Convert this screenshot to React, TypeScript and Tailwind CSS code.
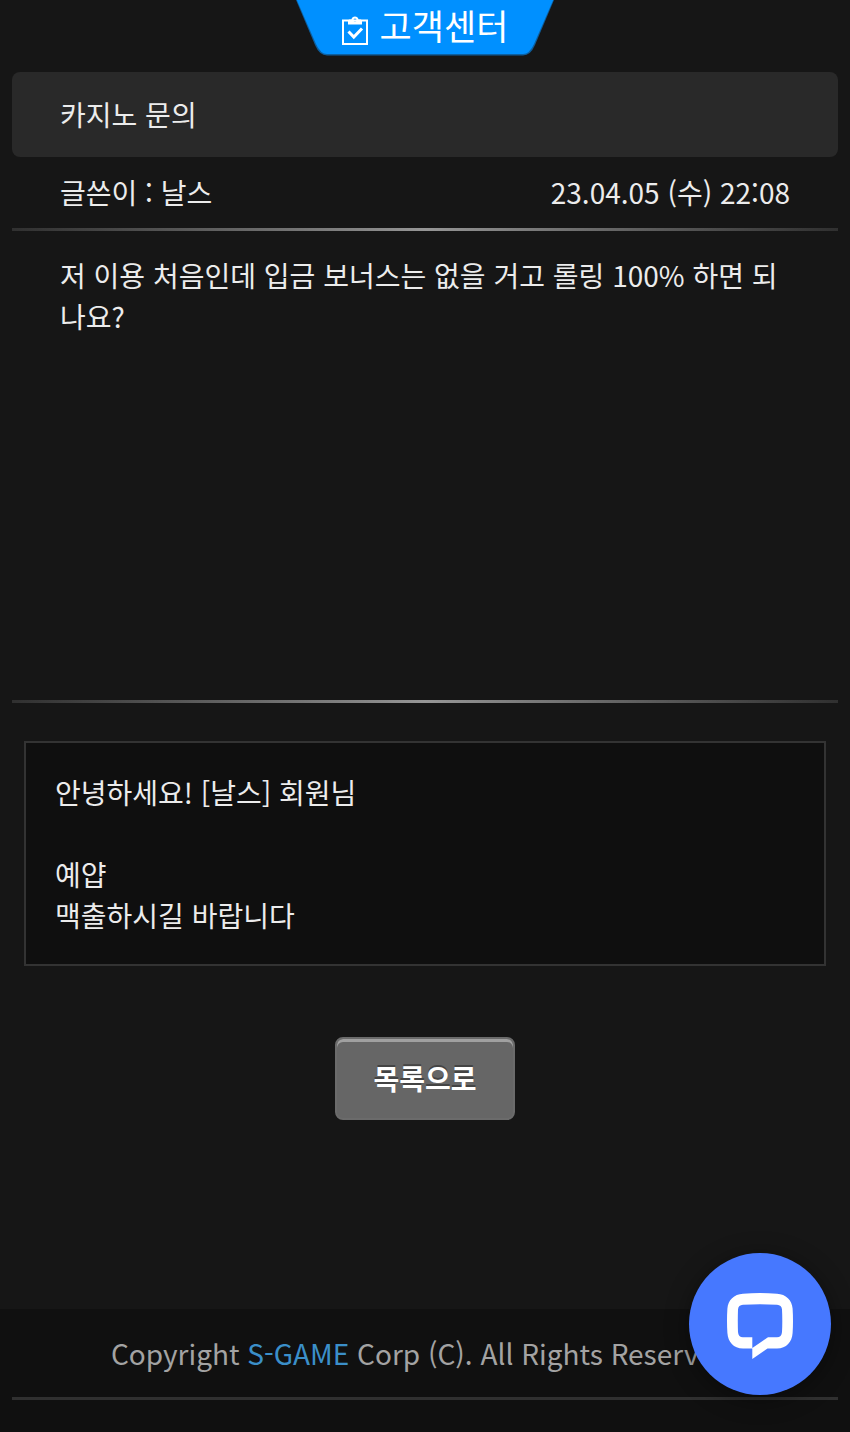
import React from 'react';

const answerLines = ['안녕하세요! [날스] 회원님', '', '예얍', '맥출하시길 바랍니다'];

const ClipboardIcon: React.FC = () => (
  <svg className="w-[26px] h-[30px]" viewBox="0 0 26 30" fill="none" aria-hidden="true">
    <rect x="1" y="4.500" width="24" height="23.500" stroke="#fff" strokeWidth="2" />
    <path
      fillRule="evenodd"
      d="M6 8.6V5.2C6 4.2 6.8 3.6 8 3.6h1.4C9.8 1.6 11.2.4 13 .4s3.200 1.200 3.600 3.200H18c1.200 0 2 .6 2 1.600v3.400H6ZM13 2.400a1.500 1.500 0 1 0 0 3 1.500 1.500 0 0 0 0-3Z"
      fill="#fff"
    />
    <path d="M6.500 15.500l5.300 5.500L20 12.500" stroke="#fff" strokeWidth="3" />
  </svg>
);

const ChatIcon: React.FC = () => (
  <svg className="w-[66px] h-[66px]" viewBox="0 0 66 66" aria-hidden="true">
    <path
      fillRule="evenodd"
      d="M16 .8Q33-.6 50 .8C59 1.400 65 7 65.600 15.500Q66.400 28 65.600 40C65 49 59.500 55.300 50 55.500H40.500L25.300 66V55.500H16C6.500 55.300 1 49 .4 40Q-.4 28 .4 15.500C1 7 7 1.400 16 .8ZM16 11.800Q33 10.800 50 11.800C53 12 54.800 13.500 55 16.500Q55.600 28 55 39C54.800 42.500 53 44.300 50 44.300H41L25.300 55V44.300H16C13 44.300 11.200 42.500 11 39Q10.600 28 11 16.500C11.200 13.500 13 12 16 11.800Z"
      fill="#fff"
    />
  </svg>
);

const Divider: React.FC = () => (
  <div className="h-[3px] bg-gradient-to-r from-[#303030] via-[#969696] to-[#303030]" />
);

const App: React.FC = () => {
  return (
    <div
      lang="ko"
      className="relative flex min-h-screen flex-col bg-[#161616] font-['Noto_Sans_CJK_KR',sans-serif] text-[28px] leading-[41px] text-[#ececec]"
    >
      {/* Page title tab */}
      <header className="flex justify-center">
        <div className="relative flex h-14 w-[258px] justify-center gap-3 pt-1">
          <svg
            className="absolute inset-0 h-full w-full"
            viewBox="0 0 258 56"
            preserveAspectRatio="none"
            aria-hidden="true"
          >
            <path d="M0 0H258L239 45Q234.500 55.500 227 55.500H31Q23.500 55.500 19 45Z" fill="#0d5f9f" />
            <path d="M.8 0H257.200L238 44Q233.500 54 227 54H31Q24.500 54 20 44Z" fill="#0090ff" />
          </svg>
          <span className="relative pt-3">
            <ClipboardIcon />
          </span>
          <h1 className="relative text-[35px] leading-[41px] text-white">고객센터</h1>
        </div>
      </header>

      <main className="flex-1 px-3 pt-4">
        {/* Question */}
        <article>
          <h2 className="rounded-lg bg-[#292929] px-12 py-[22px]">카지노 문의</h2>
          <div className="flex items-center justify-between px-12 py-[15px]">
            <span>글쓴이 : 날스</span>
            <time dateTime="2023-04-05T22:08">23.04.05 (수) 22:08</time>
          </div>
          <Divider />
          <p className="min-h-[469px] px-12 pt-6">
            저 이용 처음인데 입금 보너스는 없을 거고 롤링 100% 하면 되나요?
          </p>
          <Divider />
        </article>

        {/* Answer */}
        <section className="mx-3 mt-[38px] border-2 border-[#333333] bg-[#0f0f0f] px-[29px] pt-[29px] pb-7">
          {answerLines.map((line, index) => (
            <p key={index} className="min-h-[41px]">
              {line}
            </p>
          ))}
        </section>

        <div className="mt-[71px] flex justify-center">
          <button
            type="button"
            className="rounded-lg border-2 border-[#6b6b6b] bg-[#666666] px-9 py-[19px] font-bold text-white shadow-[inset_0_3px_0_#a0a0a0] [text-shadow:0_-2px_0_#444444]"
          >
            목록으로
          </button>
        </div>
      </main>

      <footer className="bg-[#101010] px-3 pt-6 pb-8">
        <p className="border-b-3 border-[#303030] pb-[23px] text-center text-[#a3a3a3]">
          Copyright{' '}
          <a href="#" className="text-[#3b8fc9]">
            S-GAME
          </a>{' '}
          Corp (C). All Rights Reserved.
        </p>
      </footer>

      {/* Live chat launcher */}
      <button
        type="button"
        aria-label="채팅 상담"
        className="fixed right-[19px] bottom-[37px] flex h-[142px] w-[142px] items-center justify-center rounded-full bg-[#4678ff] pt-1 shadow-[0_4px_24px_rgba(0,0,0,0.4)]"
      >
        <ChatIcon />
      </button>
    </div>
  );
};

export default App;
